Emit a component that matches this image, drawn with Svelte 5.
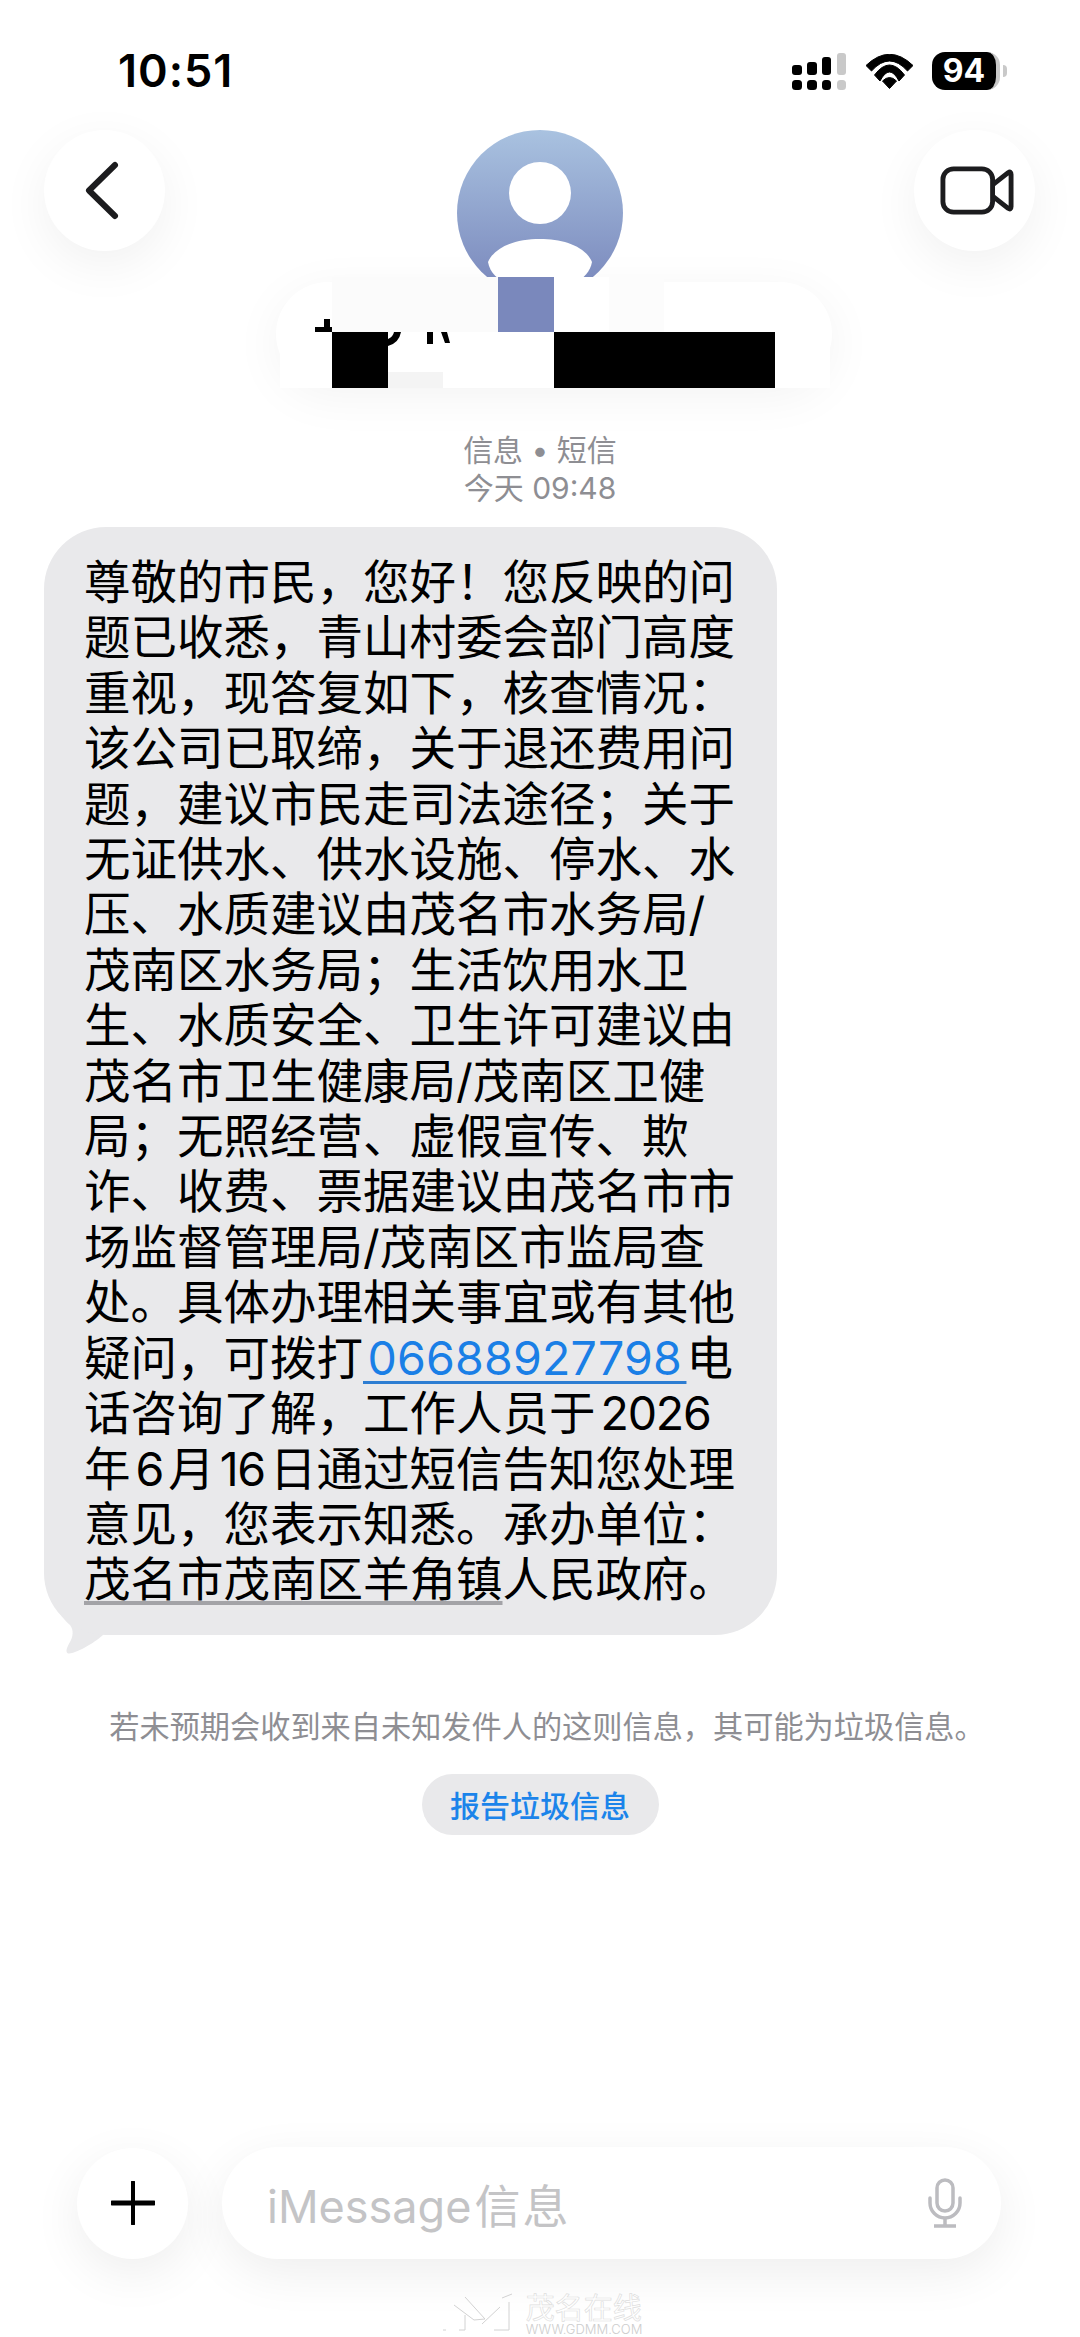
<script>
  const lines = [
    [{ t: '尊敬的市民，您好！您反映的问' }],
    [{ t: '题已收悉，青山村委会部门高度' }],
    [{ t: '重视，现答复如下，核查情况：' }],
    [{ t: '该公司已取缔，关于退还费用问' }],
    [{ t: '题，建议市民走司法途径；关于' }],
    [{ t: '无证供水、供水设施、停水、水' }],
    [{ t: '压、水质建议由茂名市水务局/' }],
    [{ t: '茂南区水务局；生活饮用水卫' }],
    [{ t: '生、水质安全、卫生许可建议由' }],
    [{ t: '茂名市卫生健康局/茂南区卫健' }],
    [{ t: '局；无照经营、虚假宣传、欺' }],
    [{ t: '诈、收费、票据建议由茂名市市' }],
    [{ t: '场监督管理局/茂南区市监局查' }],
    [{ t: '处。具体办理相关事宜或有其他' }],
    [{ t: '疑问，可拨打' }, { t: '\u200a06688927798\u200a', c: 'link' }, { t: '电' }],
    [{ t: '话咨询了解，工作人员于' }, { t: '2026', c: 'num' }],
    [{ t: '年' }, { t: '6', c: 'num' }, { t: '月' }, { t: '16', c: 'num' }, { t: '日通过短信告知您处理' }],
    [{ t: '意见，您表示知悉。承办单位：' }],
    [{ t: '茂名市茂南区羊角镇', c: 'addr' }, { t: '人民政府。' }]
  ];

  // redaction blocks over the contact name
  const mosaic = [
    [52, 0, 56, 55, '#fbfbfb'],
    [108, 0, 110, 55, '#fbfbfb'],
    [218, 0, 56, 55, '#7a88bc'],
    [274, 0, 55, 55, '#ffffff'],
    [329, 0, 55, 55, '#fcfcfc'],
    [0, 55, 52, 56, '#ffffff'],
    [52, 55, 56, 56, '#000000'],
    [108, 55, 55, 40, '#ffffff'],
    [108, 95, 55, 16, '#f4f4f4'],
    [163, 55, 111, 56, '#ffffff'],
    [274, 55, 221, 56, '#000000'],
    [495, 55, 55, 56, '#ffffff']
  ];
</script>

<div class="page">
  <div class="status">
    <span class="time">10:51</span>
    <div class="status-icons">
      <svg width="56" height="40" viewBox="0 0 56 40">
        <rect x="1" y="13" width="10" height="10" rx="3" fill="#000" />
        <rect x="16" y="10" width="10" height="13" rx="3" fill="#000" />
        <rect x="31" y="5" width="9" height="18" rx="3" fill="#000" />
        <rect x="46" y="1" width="9" height="22" rx="3" fill="#c9c9c9" />
        <rect x="1" y="28" width="10" height="10" rx="3.5" fill="#000" />
        <rect x="16" y="28" width="10" height="10" rx="3.5" fill="#000" />
        <rect x="31" y="28" width="9" height="10" rx="3.5" fill="#000" />
        <rect x="46" y="28" width="9" height="10" rx="3.5" fill="#c9c9c9" />
      </svg>
      <svg class="wifi" width="47" height="36" viewBox="0 0 47 36">
        <path d="M0 11.5 Q23.5 -11 47 11.5 L41.5 17 Q23.5 -3 5.5 17 Z" fill="#000" stroke="#000" stroke-linejoin="round" />
        <path d="M8.5 21 Q23.5 1 38.5 21 L33 27 Q23.5 9 14 27 Z" fill="#000" stroke="#000" stroke-linejoin="round" />
        <path d="M16.5 27 Q23.5 20 30.5 27 L23.5 34.5 Z" fill="#000" stroke="#000" stroke-linejoin="round" />
      </svg>
      <div class="battery">
        <div class="battery-body">94</div>
        <div class="battery-nub"></div>
      </div>
    </div>
  </div>

  <div class="nav">
    <button type="button" class="round" aria-label="返回">
      <svg width="44" height="64" viewBox="0 0 44 64">
        <path d="M36 9 L10 34.5 L36 60" transform="translate(-4 -3)" fill="none" stroke="#1c1c1e" stroke-width="6" stroke-linecap="round" stroke-linejoin="round" />
      </svg>
    </button>

    <svg class="avatar" width="166" height="166" viewBox="0 0 166 166">
      <defs>
        <linearGradient id="av" x1="0" y1="0" x2="0" y2="1">
          <stop offset="0" stop-color="#a9c2e0" />
          <stop offset="1" stop-color="#7886bb" />
        </linearGradient>
        <clipPath id="avc"><circle cx="83" cy="83" r="83" /></clipPath>
      </defs>
      <circle cx="83" cy="83" r="83" fill="url(#av)" />
      <g clip-path="url(#avc)">
        <circle cx="83" cy="63" r="31" fill="#fff" />
        <path d="M31 132 C38 116 60 109 83 109 C106 109 128 116 135 132 C132 150 110 160 83 160 C56 160 34 150 31 132 Z" fill="#fff" />
      </g>
    </svg>

    <button type="button" class="round video" aria-label="视频通话">
      <svg width="74" height="49" viewBox="0 0 76 52" preserveAspectRatio="none">
        <rect x="3" y="3" width="51" height="46" rx="11" fill="none" stroke="#1c1c1e" stroke-width="5" />
        <path d="M54 20 L70 7 Q73 5 73 9 L73 43 Q73 47 70 45 L54 32" fill="none" stroke="#1c1c1e" stroke-width="5" stroke-linejoin="round" />
      </svg>
    </button>

    <div class="name-pill"></div>

    <svg class="mosaic" width="550" height="111" viewBox="0 0 550 111">
      {#each mosaic as [x, y, w, h, fill]}
        <rect {x} {y} width={w} height={h} {fill} />
      {/each}
      <rect x="35" y="50" width="17" height="5" fill="#000" />
      <rect x="44" y="42" width="6" height="8" fill="#000" />
      <path d="M121 55 Q119 66 108 69 L108 62 Q113 60 114 55 Z" fill="#000" />
      <rect x="147" y="55" width="6" height="12" fill="#000" />
      <path d="M161 55 L167 55 L170 66 L165 66 Z" fill="#000" />
    </svg>
  </div>

  <div class="meta">
    <div>信息 • 短信</div>
    <div>今天 09:48</div>
  </div>

  <div class="bubble-wrap">
    <svg class="tail" width="60" height="50" viewBox="0 0 60 50">
      <path d="M12 0 C14 8 20 16 26 21 C30 26 29 33 26 38 C23 43 21 48 24 49.5 C28 50 44 44 59 31 L60 0 Z" fill="#e9e9eb" />
    </svg>
    <div class="bubble">
      {#each lines as parts}
        <div class="line">
          {#each parts as part}
            <span class={part.c}>{part.t}</span>
          {/each}
        </div>
      {/each}
    </div>
  </div>

  <p class="notice">若未预期会收到来自未知发件人的这则信息，其可能为垃圾信息。</p>
  <button type="button" class="report">报告垃圾信息</button>

  <div class="composer">
    <button type="button" class="plus" aria-label="添加">
      <svg width="44" height="44" viewBox="0 0 44 44">
        <path d="M22 1 V43" stroke="#000" stroke-width="4" stroke-linecap="round" />
        <path d="M1 22 H43" stroke="#000" stroke-width="5" stroke-linecap="round" />
      </svg>
    </button>
    <div class="field">
      <span class="placeholder">iMessage<span class="placeholder-cn">信息</span></span>
      <svg width="36" height="50" viewBox="0 0 36 50">
        <rect x="10" y="2" width="16" height="31" rx="8" fill="none" stroke="#bcbcc0" stroke-width="3.5" />
        <path d="M3 20 V25 A15 15 0 0 0 33 25 V20" fill="none" stroke="#bcbcc0" stroke-width="3.5" stroke-linecap="round" />
        <path d="M18 40 V47 M7 48 H29" stroke="#bcbcc0" stroke-width="3.5" />
      </svg>
    </div>
  </div>

  <div class="watermark">
    <svg width="72" height="41" viewBox="0 0 72 41">
      <path d="M12 13 L32 28 L43 27 L23 5 M23 23 V38 H17 M67 10 V38 H52 M58 15 L40 32 M1 38 H4 M60 6 L70 2" fill="none" stroke="#d2d2d2" stroke-width="1" />
    </svg>
    <div class="wm-text">
      <div class="wm-cn">茂名在线</div>
      <div class="wm-en">WWW.GDMM.COM</div>
    </div>
  </div>
</div>

<style>
  :global(body) {
    margin: 0;
    background: #fff;
  }

  .page {
    position: relative;
    display: flex;
    flex-direction: column;
    width: 1080px;
    height: 2337px;
    overflow: hidden;
    background: #fff;
    color: #000;
    font-family: Inter, "Noto Sans CJK SC", sans-serif;
  }

  .status {
    display: flex;
    justify-content: space-between;
    align-items: flex-start;
    height: 130px;
    box-sizing: border-box;
    padding: 46px 73px 0 118px;
  }

  .time {
    font-size: 45px;
    font-weight: 600;
    line-height: 50px;
    letter-spacing: 1px;
  }

  .status-icons {
    display: flex;
    align-items: flex-start;
    gap: 19px;
    margin-top: 6px;
  }

  .wifi {
    margin-top: 2px;
  }

  .battery {
    display: flex;
    align-items: center;
    gap: 3px;
  }

  .battery-body {
    width: 68px;
    height: 38px;
    box-sizing: border-box;
    border-radius: 13px;
    border-right: 4px solid #c9c9c9;
    background: #000;
    color: #fff;
    font-size: 32px;
    font-weight: 700;
    line-height: 38px;
    text-align: center;
  }

  .battery-nub {
    width: 4px;
    height: 12px;
    border-radius: 0 4px 4px 0;
    background: #c9c9c9;
  }

  .nav {
    position: relative;
    display: flex;
    justify-content: space-between;
    align-items: flex-start;
    height: 301px;
    box-sizing: border-box;
    padding: 0 45px 0 44px;
  }

  .round {
    display: flex;
    align-items: center;
    justify-content: center;
    width: 121px;
    height: 121px;
    padding: 0;
    border: 0;
    border-radius: 50%;
    background: #fff;
    box-shadow: 0 14px 50px rgba(0, 0, 0, 0.06);
  }

  .round.video svg {
    margin-left: 4px;
  }

  .avatar {
    position: relative;
    z-index: 1;
    display: block;
  }

  .name-pill {
    position: absolute;
    top: 152px;
    left: 276px;
    width: 556px;
    height: 104px;
    border-radius: 52px;
    background: #fff;
    box-shadow: 0 10px 50px rgba(0, 0, 0, 0.05);
  }

  .mosaic {
    position: absolute;
    top: 147px;
    left: 280px;
    z-index: 2;
  }

  .meta {
    color: #8e8e93;
    font-size: 30px;
    line-height: 38px;
    text-align: center;
  }

  .bubble-wrap {
    position: relative;
    width: 733px;
    margin: 20px 0 0 44px;
  }

  .tail {
    position: absolute;
    left: 0;
    bottom: -19px;
  }

  .bubble {
    position: relative;
    box-sizing: border-box;
    padding: 28px 0 27px 40px;
    border-radius: 62px;
    background: #e9e9eb;
    font-size: 46.5px;
    line-height: 55.4px;
  }

  .line {
    white-space: nowrap;
  }

  .num {
    letter-spacing: -1.2px;
    padding: 0 5px;
  }

  .link {
    color: #1a7fe6;
    letter-spacing: 0.2px;
    text-decoration: underline 3px #2d7dd2;
    text-decoration-skip-ink: none;
    text-underline-offset: 6px;
  }

  .addr {
    text-decoration: underline 4px #a3a3a7;
    text-decoration-skip-ink: none;
    text-underline-offset: 5px;
  }

  .notice {
    margin: 72px 0 0;
    padding-left: 14px;
    color: #8e8e93;
    font-size: 30.2px;
    line-height: 40px;
    text-align: center;
    white-space: nowrap;
  }

  .report {
    align-self: center;
    width: 237px;
    height: 61px;
    margin-top: 27px;
    padding: 0;
    border: 0;
    border-radius: 31px;
    background: #e9e9eb;
    color: #1b84ea;
    font: inherit;
    font-size: 30px;
    font-weight: 500;
  }

  .composer {
    display: flex;
    align-items: center;
    gap: 34px;
    margin-top: auto;
    padding: 0 79px 0 77px;
  }

  .plus {
    display: flex;
    align-items: center;
    justify-content: center;
    flex: 0 0 auto;
    width: 111px;
    height: 111px;
    padding: 0;
    border: 0;
    border-radius: 50%;
    background: #fff;
    box-shadow: 0 14px 50px rgba(0, 0, 0, 0.07);
  }

  .field {
    display: flex;
    flex: 1;
    align-items: center;
    justify-content: space-between;
    height: 112px;
    box-sizing: border-box;
    padding: 0 38px 0 45px;
    border-radius: 56px;
    background: #fff;
    box-shadow: 0 14px 50px rgba(0, 0, 0, 0.07);
  }

  .placeholder {
    color: #c4c4c6;
    font-size: 45px;
  }

  .placeholder-cn {
    margin-left: 3px;
    font-size: 46px;
    letter-spacing: 2px;
  }

  .watermark {
    display: flex;
    align-items: flex-start;
    justify-content: center;
    gap: 12px;
    height: 78px;
    box-sizing: border-box;
    padding: 33px 0 0 4px;
  }

  .wm-text {
    display: flex;
    flex-direction: column;
    margin-top: 3px;
    color: #fff;
  }

  .wm-cn {
    font-size: 29px;
    line-height: 28px;
    -webkit-text-stroke: 0.7px #dedede;
    white-space: nowrap;
  }

  .wm-en {
    color: #cdcdcd;
    font-size: 13px;
    font-weight: 300;
    line-height: 12px;
  }
</style>
